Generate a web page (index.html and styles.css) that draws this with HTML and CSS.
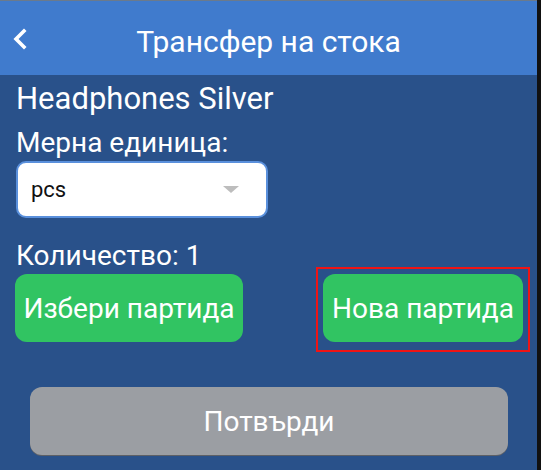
FILE: index.html
```html
<!DOCTYPE html>
<html>
<head>
<meta charset="utf-8">
<link rel="stylesheet" href="styles.css">
</head>
<body>
<div class="app">
  <header class="topbar">
    <div class="back">
      <svg width="16" height="22" viewBox="0 0 16 22"><path d="M12 3 L4 11 L12 19" fill="none" stroke="#fff" stroke-width="3.6" stroke-linecap="square" stroke-linejoin="miter"/></svg>
    </div>
    <div class="title">Трансфер на стока</div>
    <div></div>
  </header>
  <main class="content">
    <div class="product">Headphones Silver</div>
    <div class="label">Мерна единица:</div>
    <div class="select">
      <span class="select-value">pcs</span>
      <span class="caret"></span>
    </div>
    <div class="qty">Количество: 1</div>
    <div class="actions">
      <button class="btn green left">Избери партида</button>
      <div class="highlight">
        <button class="btn green right">Нова партида</button>
      </div>
    </div>
    <div class="confirm-row">
      <button class="btn gray">Потвърди</button>
    </div>
  </main>
</div>
</body>
</html>
```
FILE: styles.css
```css
* { box-sizing: border-box; }
html, body { margin: 0; padding: 0; }
body {
  background: #111;
  font-family: Roboto, "Noto Sans", sans-serif;
  width: 541px;
  height: 470px;
  overflow: hidden;
}
.app {
  width: 537px;
  height: 470px;
  background: #29518a;
  border-top: 1px solid #6b7a8c;
}
.topbar {
  height: 74px;
  background: #407bcd;
  display: grid;
  grid-template-columns: 1fr auto 1fr;
  align-items: start;
}
.back {
  padding-left: 12px;
  padding-top: 27px;
  display: flex;
}
.title {
  color: #fff;
  font-size: 30px;
  line-height: 36px;
  margin-top: 23px;
}
.content {
  padding: 6px 14px 0 16px;
  color: #fff;
}
.product {
  font-size: 31px;
  line-height: 36px;
}
.label {
  font-size: 28px;
  line-height: 34px;
  margin-top: 9px;
}
.select {
  margin-top: 1px;
  width: 252px;
  height: 57px;
  background: #fff;
  border: 2px solid #5a90dc;
  border-radius: 10px;
  display: flex;
  align-items: center;
  justify-content: space-between;
  padding: 0 27px 0 13px;
}
.select-value {
  color: #111;
  font-size: 22px;
}
.caret {
  width: 0;
  height: 0;
  border-left: 8px solid transparent;
  border-right: 8px solid transparent;
  border-top: 7px solid #bdbdbd;
}
.qty {
  font-size: 28px;
  line-height: 34px;
  margin-top: 21px;
}
.actions {
  display: flex;
  justify-content: space-between;
  align-items: flex-start;
  margin-left: -1px;
  margin-top: -6px;
}
.btn {
  border: none;
  color: #fff;
  font-family: Roboto, "Noto Sans", sans-serif;
  font-size: 28px;
  border-radius: 12px;
  height: 68px;
  padding: 0;
  margin: 0;
}
.green { background: #31c462; }
.left { width: 228px; margin-top: 7px; }
.highlight {
  border: 2px solid #f01414;
  padding: 5px 5px 8px 5px;
  margin-right: -7px;
}
.right { width: 200px; display: block; }
.confirm-row {
  margin-top: 35px;
  padding-left: 14px;
}
.gray {
  width: 478px;
  background: #9b9ea3;
  box-shadow: 0 1px 0 #5d6066;
}
```
